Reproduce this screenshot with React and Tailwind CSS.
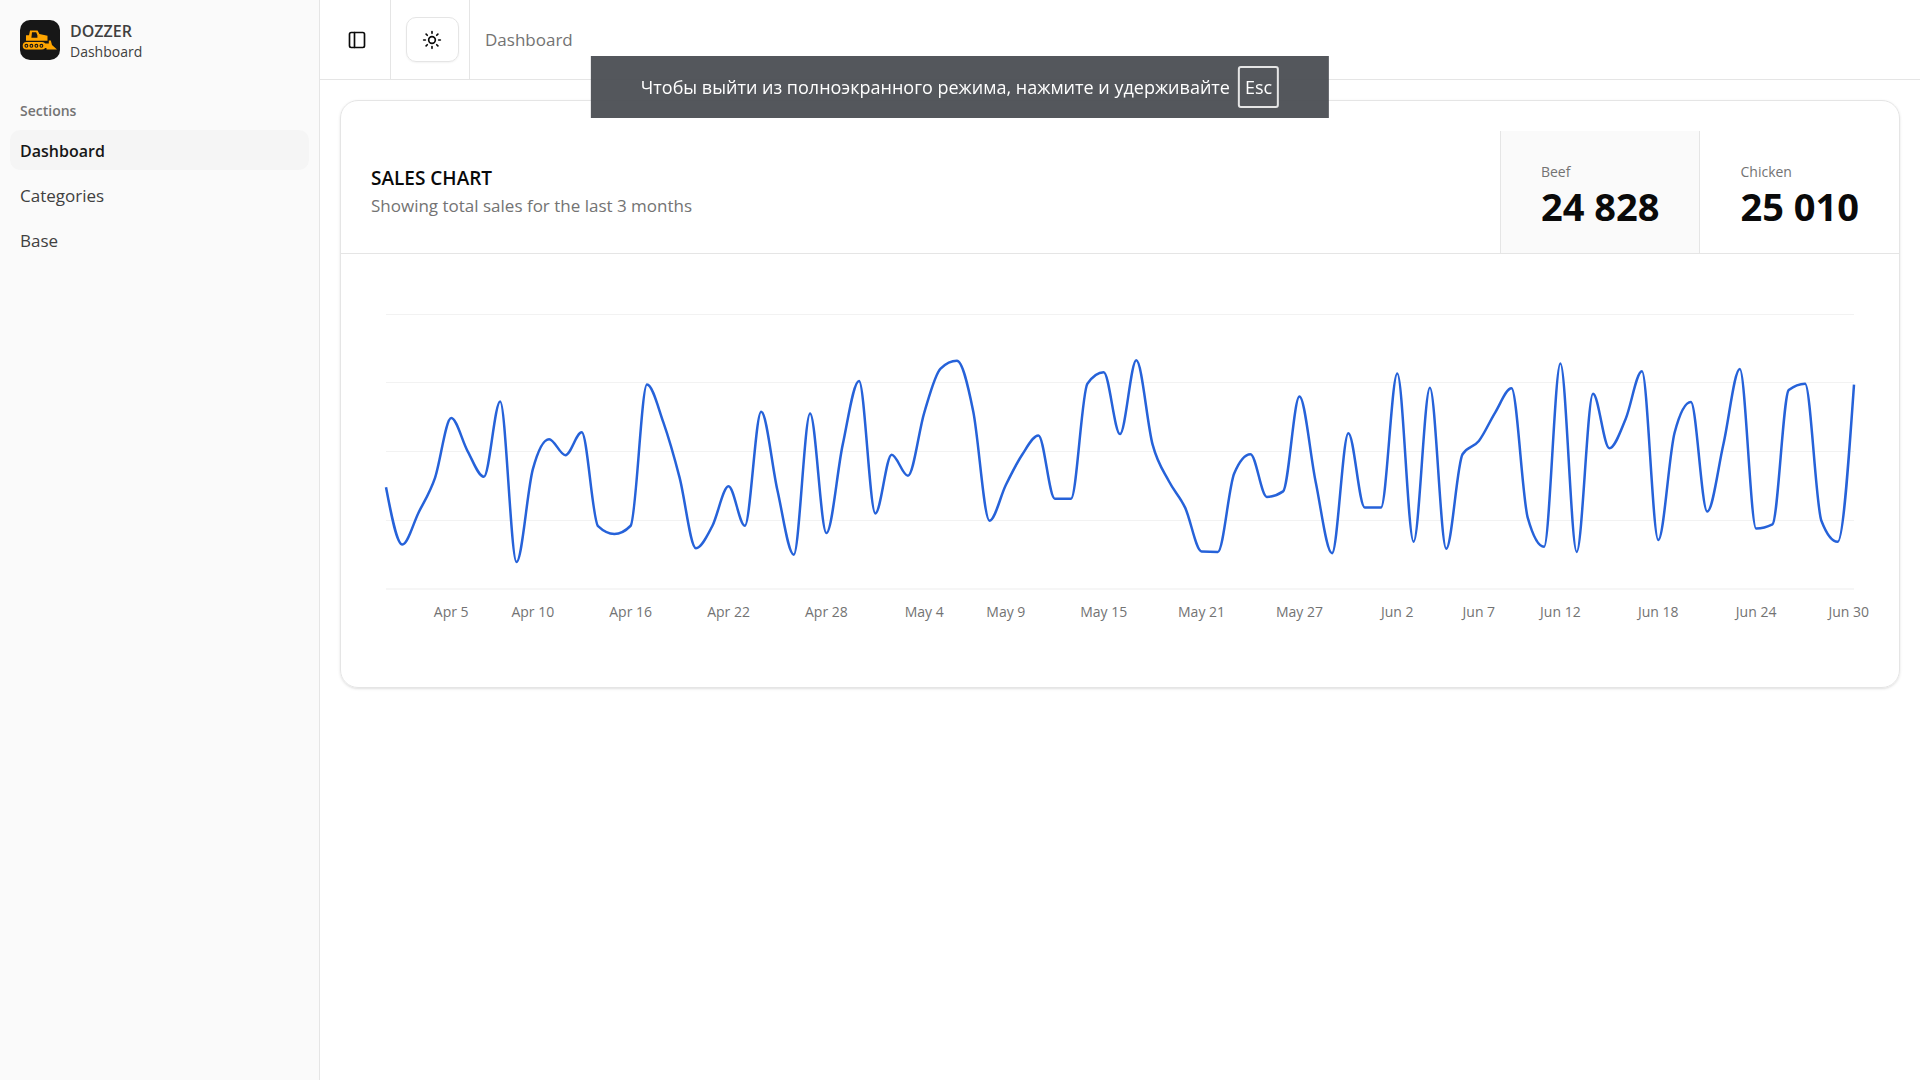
import { useLayoutEffect, useRef, useState } from "react";
import { PanelLeft, Sun } from "lucide-react";

const SALES = [
  222, 97, 167, 242, 373, 301, 245, 409, 59, 261, 327, 292, 342, 137, 120, 138,
  446, 364, 243, 89, 137, 224, 138, 387, 215, 75, 383, 122, 315, 454, 165, 293,
  247, 385, 481, 498, 388, 149, 227, 293, 335, 197, 197, 448, 473, 338, 499,
  315, 235, 177, 82, 81, 252, 294, 201, 213, 420, 233, 78, 340, 178, 178, 470,
  103, 439, 88, 294, 323, 385, 438, 155, 92, 492, 81, 426, 307, 371, 475, 107,
  341, 408, 169, 317, 480, 132, 141, 434, 448, 149, 103, 446,
];

const TICKS = [
  [4, "Apr 5"], [9, "Apr 10"], [15, "Apr 16"], [21, "Apr 22"], [27, "Apr 28"],
  [33, "May 4"], [38, "May 9"], [44, "May 15"], [50, "May 21"], [56, "May 27"],
  [62, "Jun 2"], [67, "Jun 7"], [72, "Jun 12"], [78, "Jun 18"], [84, "Jun 24"],
  [90, "Jun 30"],
];

const GRID = [0, 150, 300, 450, 600];
const MARGIN = 15;
const PLOT_TOP = 6;
const PLOT_HEIGHT = 275;

const yOf = (v) => PLOT_TOP + PLOT_HEIGHT * (1 - v / 600);
const gridY = (v) => (v === 0 ? yOf(0) : Math.floor(yOf(v)) + 0.5);

// Monotone cubic interpolation through evenly spaced points.
function monotonePath(points) {
  const n = points.length;
  const h = points[1][0] - points[0][0];
  const s = points.slice(1).map((p, i) => (p[1] - points[i][1]) / h);
  const t = points.map((_, i) => {
    if (i === 0 || i === n - 1) return 0;
    const a = s[i - 1];
    const b = s[i];
    return (Math.sign(a) + Math.sign(b)) * Math.min(Math.abs(a), Math.abs(b), Math.abs(a + b) / 4);
  });
  t[0] = (3 * s[0] - t[1]) / 2;
  t[n - 1] = (3 * s[n - 2] - t[n - 2]) / 2;
  let d = `M${points[0][0]},${points[0][1]}`;
  for (let i = 1; i < n; i++) {
    const [x0, y0] = points[i - 1];
    const [x1, y1] = points[i];
    d += `C${x0 + h / 3},${y0 + (h / 3) * t[i - 1]},${x1 - h / 3},${y1 - (h / 3) * t[i]},${x1},${y1}`;
  }
  return d;
}

function SalesChart() {
  const box = useRef(null);
  const [width, setWidth] = useState(1498);

  useLayoutEffect(() => {
    const measure = () => setWidth(box.current.clientWidth);
    measure();
    const observer = new ResizeObserver(measure);
    observer.observe(box.current);
    return () => observer.disconnect();
  }, []);

  const xOf = (i) => MARGIN + ((width - 2 * MARGIN) * i) / (SALES.length - 1);

  return (
    <div ref={box} className="min-w-0">
      <svg width={width} height="325" className="block" role="img" aria-label="Sales per day">
        {GRID.map((v) => (
          <line
            key={v}
            x1={MARGIN}
            x2={width - MARGIN}
            y1={gridY(v)}
            y2={gridY(v)}
            strokeWidth={v === 0 ? 2 : 1}
            className={v === 0 ? "stroke-[#f6f6f6]" : "stroke-[#f2f2f2]"}
          />
        ))}
        <path
          d={monotonePath(SALES.map((v, i) => [xOf(i), yOf(v)]))}
          className="fill-none stroke-[#2662d9]"
          strokeWidth="2.5"
        />
        {TICKS.map(([i, label]) => (
          <text
            key={label}
            x={i === 90 ? width : xOf(i)}
            y="309"
            textAnchor={i === 90 ? "end" : "middle"}
            className="fill-neutral-500 text-[14px]"
          >
            {label}
          </text>
        ))}
      </svg>
    </div>
  );
}

function Logo() {
  return (
    <svg viewBox="0 0 40 40" className="size-10 rounded-[10px] bg-neutral-900" aria-hidden="true">
      <g fill="#ffa500">
        <path
          fillRule="evenodd"
          d="M6 20.8V15.2H9L10 10.4H17.6L19.4 14L27.5 15.8V20.8ZM12 12.2L11.4 17.8H17.4V15.2L16.2 12.2Z"
        />
        <rect x="2.7" y="22" width="23" height="7.6" rx="3.8" />
        <path d="M24 23.4H28.8V20.4H30.8L32 25L37 29.6H26.5V28H24Z" />
      </g>
      {[6.4, 11.4, 16.4, 21.4].map((x) => (
        <circle key={x} cx={x} cy="25.8" r="1.4" fill="#ffa500" stroke="#171717" strokeWidth="1.1" />
      ))}
    </svg>
  );
}

const NAV = ["Dashboard", "Categories", "Base"];

function Sidebar() {
  return (
    <aside className="flex w-80 shrink-0 flex-col border-r border-neutral-200 bg-neutral-50 px-2.5 text-neutral-700">
      <div className="flex h-20 items-center gap-2.5 px-2.5">
        <Logo />
        <div className="pt-0.5">
          <div className="text-[16px] leading-[21px] font-semibold">DOZZER</div>
          <div className="text-[14px] leading-5">Dashboard</div>
        </div>
      </div>
      <h2 className="mt-2.5 flex h-10 items-center px-2.5 text-[14px] font-semibold text-neutral-500">
        Sections
      </h2>
      <nav className="flex flex-col gap-[5px]">
        {NAV.map((item) => (
          <a
            key={item}
            href="#"
            className={
              item === "Dashboard"
                ? "flex h-10 items-center rounded-[10px] bg-neutral-100 px-2.5 pt-0.5 text-[16px] font-semibold text-neutral-900"
                : "flex h-10 items-center rounded-[10px] px-2.5 pt-0.5 text-[17px]"
            }
          >
            {item}
          </a>
        ))}
      </nav>
    </aside>
  );
}

function Header() {
  return (
    <header className="flex h-20 shrink-0 items-stretch border-b border-neutral-200">
      <div className="flex w-[71px] items-center justify-center border-r border-neutral-200 pl-1">
        <button type="button" aria-label="Toggle sidebar" className="flex size-9 items-center justify-center">
          <PanelLeft size={20} />
        </button>
      </div>
      <div className="flex w-[79px] items-center justify-center border-r border-neutral-200 pl-1">
        <button
          type="button"
          aria-label="Toggle theme"
          className="flex h-[45px] w-[53px] items-center justify-center rounded-[10px] border border-neutral-200 shadow-xs"
        >
          <Sun size={20} />
        </button>
      </div>
      <div className="flex items-center pl-[15px] text-[17px] text-neutral-500">Dashboard</div>
    </header>
  );
}

function Tab({ label, value, active }) {
  return (
    <button
      type="button"
      aria-pressed={active}
      className={
        active
          ? "flex flex-col justify-center border-l border-neutral-200 bg-neutral-50 px-10 pt-1 text-left"
          : "flex flex-col justify-center border-l border-neutral-200 px-10 pt-1 text-left"
      }
    >
      <span className="text-[14px] leading-5 text-neutral-500">{label}</span>
      <span className="mt-1 text-[38px] leading-10 font-bold whitespace-nowrap">{value}</span>
    </button>
  );
}

export default function App() {
  return (
    <div className="flex min-h-screen bg-white font-['Open_Sans','Noto_Sans',sans-serif] text-neutral-950">
      <Sidebar />
      <div className="flex min-w-0 flex-1 flex-col">
        <Header />
        <main className="p-5">
          <section className="rounded-[18px] border border-neutral-200 pt-[30px] shadow-sm">
            <div className="flex h-[123px] items-stretch border-b border-neutral-200">
              <div className="flex flex-1 flex-col justify-center px-[30px]">
                <h1 className="text-[19px] leading-7 font-semibold">SALES CHART</h1>
                <p className="text-[17px] leading-7 text-neutral-500">
                  Showing total sales for the last 3 months
                </p>
              </div>
              <div className="flex">
                <Tab label="Beef" value="24 828" active />
                <Tab label="Chicken" value="25 010" active={false} />
              </div>
            </div>
            <div className="px-[30px] py-[54px]">
              <SalesChart />
            </div>
          </section>
        </main>
      </div>
      <div
        role="status"
        className="fixed top-14 left-1/2 flex h-[62px] -translate-x-1/2 items-center gap-2 bg-[#4b4e53]/95 px-[50px] text-[18px] whitespace-nowrap text-white"
      >
        <span>Чтобы выйти из полноэкранного режима, нажмите и удерживайте</span>
        <kbd className="flex h-[42px] items-center rounded-[3px] border-2 border-neutral-200 px-[5px] font-['Open_Sans','Noto_Sans',sans-serif]">
          Esc
        </kbd>
      </div>
    </div>
  );
}
